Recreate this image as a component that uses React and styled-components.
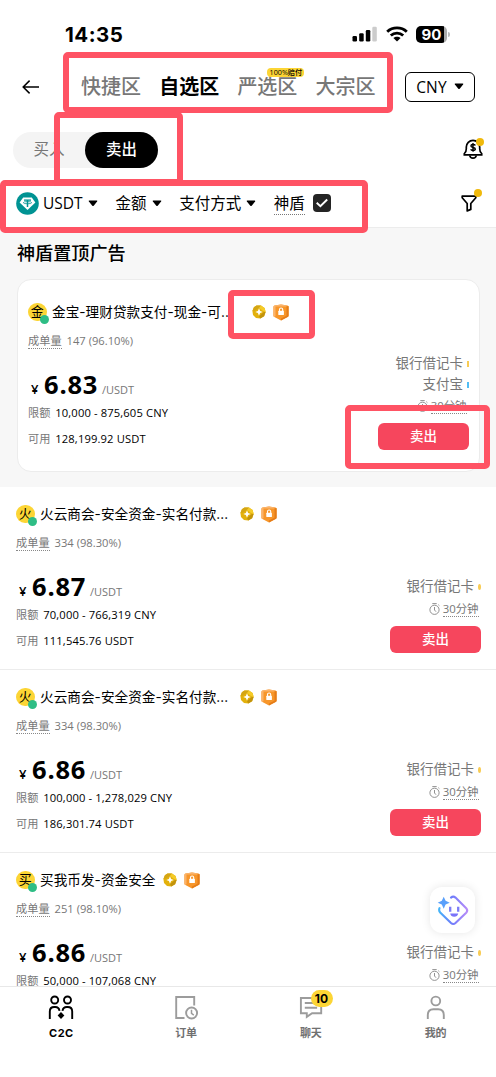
import styled, { createGlobalStyle } from 'styled-components';

const ads = [
  {
    id: 1,
    initial: '火',
    name: '火云商会-安全资金-实名付款...',
    nameWidth: 190,
    orders: '334 (98.30%)',
    price: '6.87',
    limit: '70,000 - 766,319 CNY',
    available: '111,545.76 USDT',
  },
  {
    id: 2,
    initial: '火',
    name: '火云商会-安全资金-实名付款...',
    nameWidth: 190,
    orders: '334 (98.30%)',
    price: '6.86',
    limit: '100,000 - 1,278,029 CNY',
    available: '186,301.74 USDT',
  },
  {
    id: 3,
    initial: '买',
    name: '买我币发-资金安全',
    nameWidth: 113,
    orders: '251 (98.10%)',
    price: '6.86',
    limit: '50,000 - 107,068 CNY',
  },
];

const pinnedAd = {
  initial: '金',
  name: '金宝-理财贷款支付-现金-可...',
  nameWidth: 191,
  orders: '147 (96.10%)',
  price: '6.83',
  limit: '10,000 - 875,605 CNY',
  available: '128,199.92 USDT',
};

const Caret = () => (
  <svg width="10" height="7" viewBox="0 0 10 7">
    <path d="M1.3.6h7.4q1 0 .4.8L5.7 5.7q-.7.7-1.4 0L.9 1.4Q.3.6 1.3.6z" fill="#000" />
  </svg>
);

const SignalIcon = () => (
  <svg width="26" height="16" viewBox="0 0 26 16">
    <rect x="0.5" y="10" width="4.5" height="5.5" rx="1.2" fill="#000" />
    <rect x="7.2" y="7.3" width="4.5" height="8.2" rx="1.2" fill="#000" />
    <rect x="13.8" y="4" width="4.5" height="11.5" rx="1.2" fill="#000" />
    <rect x="20.3" y="0.8" width="4.5" height="14.7" rx="1.2" fill="#ccc" />
  </svg>
);

const WifiIcon = () => (
  <svg width="22" height="16" viewBox="0 0 22 16">
    <g fill="none" stroke="#000" strokeWidth="2.9">
      <path d="M1.2 5.7C6.7.6 15.3.6 20.8 5.7" />
      <path d="M4.8 9.5c3.5-3.2 8.9-3.2 12.4 0" />
    </g>
    <path d="M7.4 12c2-1.8 5.2-1.8 7.2 0L11 15.6z" fill="#000" />
  </svg>
);

const BackIcon = () => (
  <svg width="18" height="16" viewBox="0 0 18 16" fill="none" stroke="#000" strokeWidth="1.5">
    <path d="M17 8H1.5M7.6 1.6 1.2 8l6.4 6.4" />
  </svg>
);

const TetherIcon = () => (
  <svg width="23" height="23" viewBox="0 0 23 23">
    <circle cx="11.5" cy="11.5" r="11.3" fill="#009393" />
    <path d="M7.2 5.5h8.6l3.6 5.1-7.9 7.4-7.9-7.4z" fill="#fff" />
    <g fill="none" stroke="#009393">
      <path d="M8 8.1h7" strokeWidth="1.3" />
      <path d="M11.5 8v7" strokeWidth="1.5" />
      <ellipse cx="11.5" cy="10.7" rx="4.2" ry="1.1" strokeWidth="0.8" />
    </g>
  </svg>
);

const BellIcon = () => (
  <svg width="20" height="21" viewBox="0 0 20 21" fill="none" stroke="#000" strokeWidth="1.7">
    <path d="M1.3 15.9v-1.3c1.8-1.2 2-2.3 2-4.8V8.1a6.7 6.7 0 0 1 13.4 0v1.7c0 2.5.2 3.6 2 4.8v1.3z" />
    <path d="M6.8 16.5c.5 3.6 5.9 3.6 6.4 0" strokeWidth="1.8" />
    <path d="M12.3 6.5c-.5-1.3-4.4-1.4-4.4.5 0 2 4.4.9 4.4 3 0 2-4.1 1.8-4.6.3M10 3.9v8.9" strokeWidth="1.4" />
  </svg>
);

const FilterIcon = () => (
  <svg width="16" height="17" viewBox="0 0 16 17" fill="none" stroke="#000" strokeWidth="1.7">
    <path d="M1.2 1.1h13.6v1.7L9.8 8.5v5.9l-3.6 1.5V8.5l-5-5.7z" strokeLinejoin="round" />
  </svg>
);

const CheckIcon = () => (
  <svg width="14" height="14" viewBox="0 0 14 14" fill="none" stroke="#fff" strokeWidth="1.9">
    <path d="m1.7 6.7 3.7 3.5 6.8-6.7" />
  </svg>
);

const GoldBadge = () => (
  <svg width="14" height="14" viewBox="0 0 14 14">
    <path d="m4.5.5 4.5-.1 3.6 2.5L13.6 7l-1.5 4.2-3.8 2.4-4.3-.7-3-3L.4 6l1.5-3.8z" fill="#e3b10c" />
    <path d="m4.5.5 4.5-.1L7 3 3 5.5.4 6l1.5-3.8z" fill="#d4a514" />
    <path d="m7 11 5-4h1.6l-1.5 4.2-3.8 2.4z" fill="#c2930c" />
    <path d="m9 .4 3.6 2.5L13.6 7 11 6 7 3z" fill="#f5cb28" />
    <path d="M7 3.3 8.1 5.9l2.6 1.1-2.6 1.1L7 10.7 5.9 8.1 3.3 7l2.6-1.1z" fill="#fff" />
  </svg>
);

const ShieldBadge = () => (
  <svg width="16" height="17" viewBox="0 0 16 17">
    <path d="M1.6 1.5 8 .4l6.4 1.1q1.2.3 1.2 1.5v8.4q0 1.2-1 1.7L8 16.5l-6.6-3.4q-1-.5-1-1.7V3q0-1.2 1.2-1.5z" fill="#f7962a" />
    <path d="m13.5 2.5 2.1-.5v9.4q0 1.2-1 1.7L8 16.5v-2l5.5-2.8z" fill="#e57c18" />
    <path d="M.4 3q0-1.2 1.2-1.5L8 .4l6.4 1.1-1.4 1H2.5V12l-1.1 1.1q-1-.5-1-1.7z" fill="#fbb36a" />
    <rect x="5.3" y="6.7" width="5.6" height="4.3" rx="0.5" fill="#fff" />
    <path d="M6.5 7V5.6a1.6 1.6 0 0 1 3.2 0V7" fill="none" stroke="#fff" strokeWidth="1.1" />
  </svg>
);

const TimerIcon = () => (
  <svg width="11" height="12" viewBox="0 0 11 12" fill="none" stroke="#858585" strokeWidth="0.9">
    <circle cx="5.5" cy="6.8" r="4.6" />
    <path d="M3.3.6h4.4M9.3 1.7l1.1 1M5.5 4v3L7 8.7" />
  </svg>
);

const PeopleIcon = () => (
  <svg width="26" height="26" viewBox="0 0 26 26" fill="none" stroke="#000" strokeWidth="1.9">
    <circle cx="6.7" cy="5" r="3.5" />
    <circle cx="19.5" cy="5" r="3.5" />
    <path d="M1.8 24v-7.5q0-4.500 4.500-4.500h1q3.600 0 4.200 3.800M24.200 24v-7.500q0-4.500-4.500-4.500h-1q-3.600 0-4.200 3.800" />
    <path d="m13 16.900 3.400 3.500-3.400 3.500-3.400-3.500z" fill="#000" stroke="none" />
  </svg>
);

const OrdersIcon = () => (
  <svg width="26" height="26" viewBox="0 0 26 26" fill="none" stroke="#9c9c9c" strokeWidth="1.9">
    <path d="M21.2 10.5V2h-18v21h8.3" />
    <circle cx="18.6" cy="18" r="5.5" />
    <path d="M18.5 14.8v3.6l2.3 1.7" strokeWidth="1.5" />
  </svg>
);

const ChatIcon = () => (
  <svg width="26" height="26" viewBox="0 0 26 26" fill="none" stroke="#9c9c9c" strokeWidth="1.9">
    <path d="M2.9 3h20.3v15.2h-9.1l-5.3 3.7v-3.7H2.9z" />
    <path d="M6.8 8h9M6.8 12.8h12.3" />
  </svg>
);

const UserIcon = () => (
  <svg width="26" height="26" viewBox="0 0 26 26" fill="none" stroke="#9c9c9c" strokeWidth="1.9">
    <circle cx="12.8" cy="6" r="4.4" />
    <path d="M4.8 24v-4q0-5.800 5.600-5.800h4.800q5.600 0 5.600 5.800v4" />
  </svg>
);

const AssistantIcon = () => (
  <svg width="32" height="32" viewBox="0 0 32 32">
    <defs>
      <linearGradient id="face" x1="0" y1="0" x2="1" y2="0">
        <stop offset="0" stopColor="#45b4f8" />
        <stop offset="0.45" stopColor="#6e7bfb" />
        <stop offset="1" stopColor="#b78cf8" />
      </linearGradient>
    </defs>
    <path
      d="M14 3.600q2.200-1.900 4.500 0l10.700 10.700q2 2.200 0 4.400L18.500 29q-2.200 2-4.500 0L3.200 18.500Q1.500 16.500 2.500 14.200"
      fill="none"
      stroke="url(#face)"
      strokeWidth="2.1"
      strokeLinecap="round"
    />
    <path d="M6.7 2.7 8.6 6.8l4.1 1.9-4.1 1.9-1.900 4.100-1.900-4.100L.7 8.700l4.100-1.900z" fill="#5aa0fb" />
    <path d="M13.2 12.800v5M21.200 12.800v5" stroke="#7b7cf8" strokeWidth="2.3" />
    <path d="M13.200 19.500h8q-.7 3.300-4 3.300t-4-3.300z" fill="#7a73fa" />
  </svg>
);

const Ad = ({ ad, payments, boxed }) => (
  <StyledAd $boxed={boxed}>
    <StyledSeller>
      <StyledAvatar>
        {ad.initial}
        <StyledOnline />
      </StyledAvatar>
      <StyledName $width={ad.nameWidth} $boxed={boxed}>{ad.name}</StyledName>
      <GoldBadge />
      <ShieldBadge />
    </StyledSeller>
    <StyledAdBody>
      <StyledDetails>
        <StyledStats>
          <StyledDotted>成单量</StyledDotted>
          <span>{ad.orders}</span>
        </StyledStats>
        <StyledPrice>
          <small>¥</small>
          <strong>{ad.price}</strong>
          <span>/USDT</span>
        </StyledPrice>
        <StyledFact>
          限额 <span>{ad.limit}</span>
        </StyledFact>
        {ad.available && (
          <StyledFact>
            可用 <span>{ad.available}</span>
          </StyledFact>
        )}
      </StyledDetails>
      <StyledActions $boxed={boxed}>
        {payments.map((payment) => (
          <StyledPayment key={payment.label} $color={payment.color} $boxed={boxed}>
            {payment.label}
          </StyledPayment>
        ))}
        <StyledTimer $boxed={boxed}>
          <TimerIcon />
          <StyledDotted>30分钟</StyledDotted>
        </StyledTimer>
        {ad.available && <StyledSell>卖出</StyledSell>}
      </StyledActions>
    </StyledAdBody>
  </StyledAd>
);

const bankCard = { label: '银行借记卡', color: '#f8cc55' };
const alipay = { label: '支付宝', color: '#50bdf5' };

const App = () => {
  return (
    <StyledScreen>
      <GlobalStyle />
      <StyledStatusBar>
        <time>14:35</time>
        <StyledStatusIcons>
          <SignalIcon />
          <WifiIcon />
          <StyledBattery>90</StyledBattery>
        </StyledStatusIcons>
      </StyledStatusBar>

      <StyledHeader>
        <BackIcon />
        <StyledTabs>
          <StyledTab>快捷区</StyledTab>
          <StyledTab $active>自选区</StyledTab>
          <StyledTab>
            严选区
            <StyledTabTag>100%赔付</StyledTabTag>
          </StyledTab>
          <StyledTab>大宗区</StyledTab>
        </StyledTabs>
        <StyledCurrency>
          CNY <Caret />
        </StyledCurrency>
      </StyledHeader>

      <StyledToggleRow>
        <StyledToggle>
          <StyledToggleOption>买入</StyledToggleOption>
          <StyledToggleOption $active>卖出</StyledToggleOption>
        </StyledToggle>
        <StyledIconButton $right={13}>
          <BellIcon />
          <StyledNotice $top={-1} $right={-1} />
        </StyledIconButton>
      </StyledToggleRow>

      <StyledFilters>
        <TetherIcon />
        <StyledFilter><StyledCoin>USDT</StyledCoin><Caret /></StyledFilter>
        <StyledFilter>金额<Caret /></StyledFilter>
        <StyledFilter>支付方式<Caret /></StyledFilter>
        <StyledShield>神盾</StyledShield>
        <StyledCheckbox><CheckIcon /></StyledCheckbox>
        <StyledIconButton $right={19}>
          <FilterIcon />
          <StyledNotice $top={-6} $right={-5} />
        </StyledIconButton>
      </StyledFilters>

      <StyledFeed>
        <StyledPinned>
          <h2>神盾置顶广告</h2>
          <Ad ad={pinnedAd} payments={[bankCard, alipay]} boxed />
        </StyledPinned>
        {ads.map((ad) => (
          <Ad key={ad.id} ad={ad} payments={[bankCard]} />
        ))}
      </StyledFeed>

      <StyledNav>
        <StyledNavItem $active><PeopleIcon />C2C</StyledNavItem>
        <StyledNavItem><OrdersIcon />订单</StyledNavItem>
        <StyledNavItem>
          <ChatIcon />聊天
          <StyledCount>10</StyledCount>
        </StyledNavItem>
        <StyledNavItem><UserIcon />我的</StyledNavItem>
      </StyledNav>

      <StyledAssistant><AssistantIcon /></StyledAssistant>

      <StyledMarker $x={63} $y={52} $w={330} $h={61} />
      <StyledMarker $x={54} $y={112} $w={129} $h={73} />
      <StyledMarker $x={0} $y={180} $w={368} $h={53} />
      <StyledMarker $x={228} $y={290} $w={87} $h={49} />
      <StyledMarker $x={345} $y={405} $w={145} $h={64} />
    </StyledScreen>
  );
};

const GlobalStyle = createGlobalStyle`
  * {
    box-sizing: border-box;
  }

  body {
    margin: 0;
    background-color: #fff;
  }

  svg {
    display: block;
    flex-shrink: 0;
  }
`;

const StyledScreen = styled.div`
  position: relative;
  display: flex;
  flex-direction: column;
  width: 496px;
  height: 1077px;
  overflow: hidden;

  font-family: 'Open Sans', 'Noto Sans CJK SC', sans-serif;
  color: #000;
  background-color: #fff;
`;

const StyledStatusBar = styled.div`
  display: flex;
  justify-content: space-between;
  flex-shrink: 0;
  height: 60px;
  padding: 25px 49px 0 65px;

  time {
    font: 700 20.5px/20px Inter, sans-serif;
    letter-spacing: 0.5px;
  }
`;

const StyledStatusIcons = styled.div`
  display: flex;
  gap: 8px;
  padding-top: 1px;
`;

const StyledBattery = styled.div`
  position: relative;
  width: 31px;
  height: 17px;
  border-radius: 5px;

  font: 700 15px/17px Inter, sans-serif;
  text-align: center;
  color: #fff;
  background: linear-gradient(90deg, #000 90%, #aaa 90%);

  &::after {
    content: '';
    position: absolute;
    top: 6px;
    right: -3px;
    width: 2px;
    height: 5px;
    border-radius: 0 2px 2px 0;
    background-color: #bbb;
  }
`;

const StyledHeader = styled.div`
  display: flex;
  align-items: center;
  flex-shrink: 0;
  height: 53px;
  padding: 0 21px 0 22px;
`;

const StyledTabs = styled.div`
  display: flex;
  gap: 18.2px;
  margin-left: 41px;
`;

const StyledTab = styled.div`
  position: relative;
  font-size: 20px;
  line-height: 28px;
  font-weight: ${({ $active }) => ($active ? 700 : 500)};
  color: ${({ $active }) => ($active ? '#000' : '#777')};
`;

const StyledTabTag = styled.div`
  position: absolute;
  top: -5px;
  right: -7px;
  width: 37px;
  height: 9px;
  border-radius: 4px;

  font-size: 7.2px;
  line-height: 9px;
  text-align: center;
  color: #000;
  white-space: nowrap;
  background-color: #fcd535;
`;

const StyledCurrency = styled.div`
  display: flex;
  align-items: center;
  justify-content: center;
  gap: 7px;
  width: 70px;
  height: 30px;
  margin-left: auto;
  border: 1.5px solid #000;
  border-radius: 6px;

  font-size: 15.5px;
  letter-spacing: 0.2px;
`;

const StyledToggleRow = styled.div`
  display: flex;
  align-items: center;
  flex-shrink: 0;
  height: 67px;
  padding-top: 6px;
  padding-left: 13px;
`;

const StyledToggle = styled.div`
  display: flex;
  width: 145px;
  height: 36px;
  border-radius: 18px;
  background-color: #f4f4f4;
`;

const StyledToggleOption = styled.div`
  width: ${({ $active }) => ($active ? '73px' : '72px')};
  border-radius: 18px;

  font-size: 15.5px;
  line-height: 35px;
  font-weight: ${({ $active }) => ($active ? 500 : 400)};
  text-align: center;
  color: ${({ $active }) => ($active ? '#fff' : '#777')};
  background-color: ${({ $active }) => ($active ? '#000' : 'transparent')};
`;

const StyledIconButton = styled.div`
  position: relative;
  margin-left: auto;
  margin-right: ${({ $right }) => $right}px;
`;

const StyledNotice = styled.span`
  position: absolute;
  top: ${({ $top }) => $top}px;
  right: ${({ $right }) => $right}px;
  width: 8px;
  height: 8px;
  border-radius: 50%;
  background-color: #f0b90b;
`;

const StyledFilters = styled.div`
  display: flex;
  align-items: center;
  flex-shrink: 0;
  height: 48px;
  padding-left: 16px;
  padding-bottom: 1px;
  border-bottom: 1px solid #ececec;

  font-size: 15.5px;
  line-height: 22px;
`;

const StyledFilter = styled.div`
  display: flex;
  align-items: center;
  gap: 5px;
  margin-right: 17.6px;
`;

const StyledCoin = styled.span`
  width: 40px;
  margin-left: 4px;
`;

const StyledShield = styled.span`
  margin-top: 1px;
  border-bottom: 1px dotted #777;
`;

const StyledCheckbox = styled.div`
  display: flex;
  align-items: center;
  justify-content: center;
  width: 18px;
  height: 18px;
  margin-left: 8px;
  border-radius: 4px;
  background-color: #242424;
`;

const StyledFeed = styled.div`
  flex: 1;
  min-height: 0;
  overflow: hidden;
`;

const StyledPinned = styled.div`
  height: 259px;
  padding: 11px 16px 0 17px;
  background-color: #f7f7f7;

  h2 {
    margin: 0 0 12px;
    font-size: 18.1px;
    line-height: 28px;
    font-weight: 500;
  }
`;

const StyledAd = styled.div`
  height: ${({ $boxed }) => ($boxed ? 193 : 183)}px;
  padding: ${({ $boxed }) => ($boxed ? '22px 10px 0' : '17px 15px 0 16px')};
  border: ${({ $boxed }) => ($boxed ? '1px solid #ececec' : 'none')};
  border-bottom: 1px solid #ececec;
  border-radius: ${({ $boxed }) => ($boxed ? 14 : 0)}px;
  background-color: #fff;
`;

const StyledSeller = styled.div`
  display: flex;
  align-items: center;
  height: 20px;

  svg + svg {
    margin-left: 6.5px;
  }
`;

const StyledAvatar = styled.div`
  position: relative;
  width: 18.5px;
  height: 18.5px;
  border-radius: 50%;

  font-size: 13px;
  line-height: 17px;
  text-align: center;
  background-color: #fcd535;
`;

const StyledOnline = styled.span`
  position: absolute;
  right: -2px;
  bottom: -2.5px;
  width: 9px;
  height: 9px;
  border-radius: 50%;
  background-color: #2ebd85;
`;

const StyledName = styled.div`
  width: ${({ $width }) => $width}px;
  margin: 0 ${({ $boxed }) => ($boxed ? 9 : 10)}px 0 5.5px;

  font-family: Inter, 'Noto Sans CJK SC', sans-serif;
  font-size: 13.6px;
  line-height: 20px;
  letter-spacing: 0.05px;
  white-space: nowrap;
`;

const StyledAdBody = styled.div`
  display: flex;
  justify-content: space-between;
  height: 129px;
`;

const StyledDetails = styled.div`
  padding-top: 11px;
`;

const StyledDotted = styled.span`
  border-bottom: 1px dotted #888;
`;

const StyledStats = styled.div`
  display: flex;
  gap: 5px;
  height: 16px;

  font-size: 11.2px;
  line-height: 15px;
  color: #777;
`;

const StyledPrice = styled.div`
  display: flex;
  align-items: baseline;
  height: 30px;
  margin: 20px 0 6px 3px;

  line-height: 30px;

  small {
    width: 13px;
    font-size: 13px;
    font-weight: 600;
  }

  strong {
    width: 58px;
    font-size: 25.5px;
    font-weight: 700;
    letter-spacing: 0.8px;
  }

  span {
    font-size: 11px;
    color: #777;
  }
`;

const StyledFact = styled.div`
  height: 26px;

  font-size: 11.2px;
  line-height: 16px;
  color: #777;

  span {
    margin-left: 2px;
    letter-spacing: 0.13px;
    color: #000;
  }
`;

const StyledActions = styled.div`
  display: flex;
  flex-direction: column;
  align-items: flex-end;
  padding-top: ${({ $boxed }) => ($boxed ? 31 : 52)}px;
`;

const StyledPayment = styled.div`
  display: flex;
  align-items: center;
  gap: 4px;

  font-size: 13.5px;
  line-height: 21px;
  color: #777;

  &::after {
    content: '';
    width: ${({ $boxed }) => ($boxed ? 2 : 3)}px;
    height: 6px;
    border-radius: ${({ $boxed }) => ($boxed ? '0' : '50%')};
    background-color: ${({ $color }) => $color};
  }
`;

const StyledTimer = styled.div`
  display: flex;
  align-items: center;
  gap: 3px;
  margin: ${({ $boxed }) => ($boxed ? 3 : 4)}px 2.5px 9px 0;

  font-size: 11.4px;
  line-height: 15px;
  color: #777;
`;

const StyledSell = styled.div`
  width: 91px;
  height: 27px;
  flex-shrink: 0;
  border-radius: 6px;

  font-size: 13.5px;
  line-height: 26px;
  font-weight: 500;
  text-align: center;
  color: #fff;
  background-color: #f6465d;
`;

const StyledNav = styled.div`
  display: flex;
  flex-shrink: 0;
  height: 91px;
  margin-left: -1px;
  margin-right: -2px;
  border-top: 1px solid #e8e8e8;
  background-color: #fff;
`;

const StyledNavItem = styled.div`
  position: relative;
  display: flex;
  flex-direction: column;
  align-items: center;
  flex: 1;
  gap: 5px;
  padding-top: 8px;

  font-family: Inter, 'Noto Sans CJK SC', sans-serif;
  font-size: 11px;
  line-height: 15px;
  font-weight: 700;
  letter-spacing: ${({ $active }) => ($active ? 0.5 : 0)}px;
  color: ${({ $active }) => ($active ? '#000' : '#707070')};
`;

const StyledCount = styled.span`
  position: absolute;
  top: 3px;
  left: 62px;
  width: 22px;
  height: 17px;
  border-radius: 9px;

  font-size: 12px;
  line-height: 17px;
  font-weight: 700;
  text-align: center;
  color: #000;
  background-color: #fcd535;
`;

const StyledAssistant = styled.div`
  position: absolute;
  right: 21px;
  bottom: 144px;
  display: flex;
  align-items: center;
  justify-content: center;
  width: 45px;
  height: 46px;
  border-radius: 12px;
  background-color: #fff;
  box-shadow: 0 0 10px rgba(0, 0, 0, 0.1);
`;

const StyledMarker = styled.div`
  position: absolute;
  left: ${({ $x }) => $x}px;
  top: ${({ $y }) => $y}px;
  width: ${({ $w }) => $w}px;
  height: ${({ $h }) => $h}px;
  border: 6px solid #ff5364;
  border-radius: 5px;
  pointer-events: none;
`;

export default App;
